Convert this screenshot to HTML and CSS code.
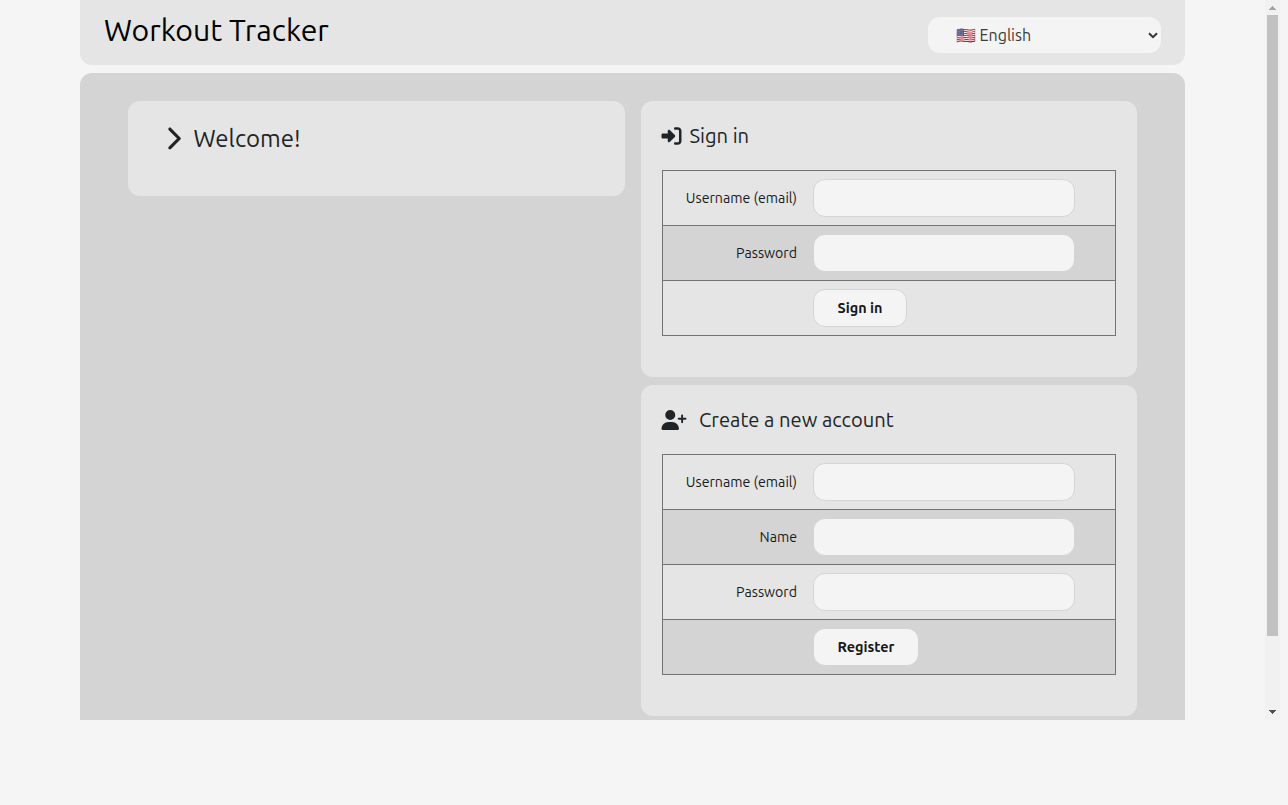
FILE: index.html
```html
<!DOCTYPE html>
<html lang="en">
<head>
<meta charset="utf-8">
<title>Workout Tracker</title>
<link rel="stylesheet" href="styles.css">
</head>
<body>
<div class="screen">
  <div class="page">
    <header class="header">
      <h1 class="title">Workout Tracker</h1>
      <div class="language">
        <span class="language-name">🇺🇸 English</span>
        <svg class="caret" viewBox="0 0 10 7"><path d="M1 1.2l4 4 4-4" fill="none" stroke="#333" stroke-width="2"/></svg>
      </div>
    </header>
    <main class="main">
      <section class="card welcome">
        <h2 class="welcome-heading">
          <svg class="chevron" viewBox="0 0 320 512"><path fill="currentColor" d="M310.600 233.400c12.500 12.500 12.500 32.800 0 45.300l-192 192c-12.500 12.500-32.800 12.500-45.300 0s-12.500-32.800 0-45.300L242.700 256 73.400 86.600c-12.500-12.500-12.500-32.800 0-45.300s32.800-12.500 45.300 0l192 192z"/></svg>
          <span class="welcome-text">Welcome!</span>
        </h2>
      </section>
      <div class="forms">
        <section class="card form-card">
          <h3 class="heading">
            <svg class="icon-signin" viewBox="0 0 512 512"><path fill="currentColor" d="M217.900 105.900L340.700 228.700c7.200 7.200 11.300 17.100 11.300 27.300s-4.100 20.100-11.300 27.300L217.900 406.100c-6.400 6.400-15 9.900-24 9.900-18.700 0-33.900-15.200-33.900-33.900V320H32c-17.700 0-32-14.300-32-32v-64c0-17.700 14.300-32 32-32h128v-62.100c0-18.700 15.200-33.900 33.900-33.900 9 0 17.600 3.600 24 9.900zM352 416h64c17.700 0 32-14.300 32-32V128c0-17.700-14.300-32-32-32h-64c-17.700 0-32-14.300-32-32s14.300-32 32-32h64c53 0 96 43 96 96v256c0 53-43 96-96 96h-64c-17.700 0-32-14.300-32-32s14.300-32 32-32z"/></svg>
            <span class="signin-text">Sign in</span>
          </h3>
          <div class="table">
            <div class="row"><label class="label email">Username (email)</label><input class="field"></div>
            <div class="row"><label class="label password">Password</label><input class="field" type="password"></div>
            <div class="row"><span class="label"></span><button class="button signin-button">Sign in</button></div>
          </div>
        </section>
        <section class="card form-card">
          <h3 class="heading">
            <svg class="icon-user" viewBox="0 0 640 512"><path fill="currentColor" d="M96 128a128 128 0 1 1 256 0 128 128 0 1 1-256 0zM0 482.300C0 383.800 79.800 304 178.300 304h91.400C368.200 304 448 383.800 448 482.300c0 16.400-13.300 29.700-29.700 29.700H29.700C13.300 512 0 498.700 0 482.300zM504 312v-64h-64c-13.300 0-24-10.700-24-24s10.700-24 24-24h64v-64c0-13.300 10.700-24 24-24s24 10.700 24 24v64h64c13.300 0 24 10.700 24 24s-10.700 24-24 24h-64v64c0 13.300-10.700 24-24 24s-24-10.700-24-24z"/></svg>
            <span class="create-text">Create a new account</span>
          </h3>
          <div class="table">
            <div class="row"><label class="label email">Username (email)</label><input class="field"></div>
            <div class="row"><label class="label name">Name</label><input class="field"></div>
            <div class="row"><label class="label password">Password</label><input class="field" type="password"></div>
            <div class="row"><span class="label"></span><button class="button register-button">Register</button></div>
          </div>
        </section>
      </div>
    </main>
  </div>
  <div class="scrollbar">
    <svg class="arrow" viewBox="0 0 15 15" shape-rendering="crispEdges"><path d="M4 10h7L7.500 6z" fill="#a3a3a3"/></svg>
    <div class="thumb"></div>
    <svg class="arrow arrow-down" viewBox="0 0 15 15" shape-rendering="crispEdges"><path d="M4 5h7L7.500 9z" fill="#505050"/></svg>
  </div>
</div>
</body>
</html>
```

FILE: styles.css
```css
* { box-sizing: border-box; }
body { margin: 0; height: 805px; overflow: hidden; background: #f5f5f5; color: #212427; font-family: Ubuntu, "Noto Sans", sans-serif; }
h1, h2, h3 { margin: 0; font-weight: 430; white-space: nowrap; }
svg { display: block; flex: none; }
.screen { display: flex; width: 1280px; height: 720px; overflow: hidden; }
.page { width: 1265px; flex: none; padding: 0 80px; }
.header { display: flex; justify-content: space-between; width: 1105px; height: 65px; padding: 0 24px; border-radius: 0 0 12px 12px; background: #e5e5e5; }
.title { color: #000; font-size: 30.240px; line-height: 60px; }
.language { display: flex; align-items: center; width: 233px; height: 36px; margin-top: 17px; padding: 0 3px 0 28px; border-radius: 12px; background: #f4f4f4; color: #3c3c3c; font-size: 16px; font-weight: 430; }
.language-name { font-family: Ubuntu, "Noto Color Emoji", "Noto Sans", sans-serif; white-space: nowrap; }
.caret { width: 10px; height: 7px; margin-left: auto; }
.main { display: flex; align-items: flex-start; gap: 16px; width: 1105px; height: 760px; margin-top: 8px; padding: 28px 48px; border-radius: 12px; background: #d4d4d4; }
.card { border-radius: 12px; background: #e5e5e5; }
.welcome { width: 497px; height: 95px; padding: 17px 36.500px; }
.welcome-heading { display: flex; align-items: center; height: 40px; font-size: 24px; }
.chevron { width: 16px; height: 25px; margin-right: 13px; }
.forms { display: flex; flex-direction: column; gap: 8px; width: 496px; }
.form-card { padding: 19px 21px 41px; }
.heading { display: flex; align-items: center; height: 31px; margin: 0 0 19px -1px; font-size: 20.160px; }
.icon-signin { width: 21px; height: 20px; margin-right: 7.500px; }
.icon-user { width: 26px; height: 20px; margin-right: 12px; }
.table { width: 454px; border: 1px solid #737373; border-top: 0; }
.row { display: flex; align-items: center; height: 55px; border-top: 1px solid #737373; }
.row:nth-child(even) { background: #d4d4d4; }
.label { display: flex; justify-content: flex-end; width: 134px; margin-right: 16px; color: #181a1c; font-size: 14.200px; font-weight: 430; white-space: nowrap; }
.field, .button { height: 38px; border: 1px solid #d4d4d4; border-radius: 12px; background: #f4f4f4; }
.field { width: 262px; padding: 0 12px; }
.button { padding: 0; color: #151719; font: 700 14.400px Ubuntu, "Noto Sans", sans-serif; }
.signin-button { width: 94px; }
.register-button { width: 106px; }
.scrollbar { width: 15px; flex: none; background: #f1f1f1; }
.arrow { width: 15px; height: 15px; }
.arrow-down { margin-top: 69px; }
.thumb { width: 11px; height: 621px; margin-left: 2px; background: #c1c1c1; }
```
